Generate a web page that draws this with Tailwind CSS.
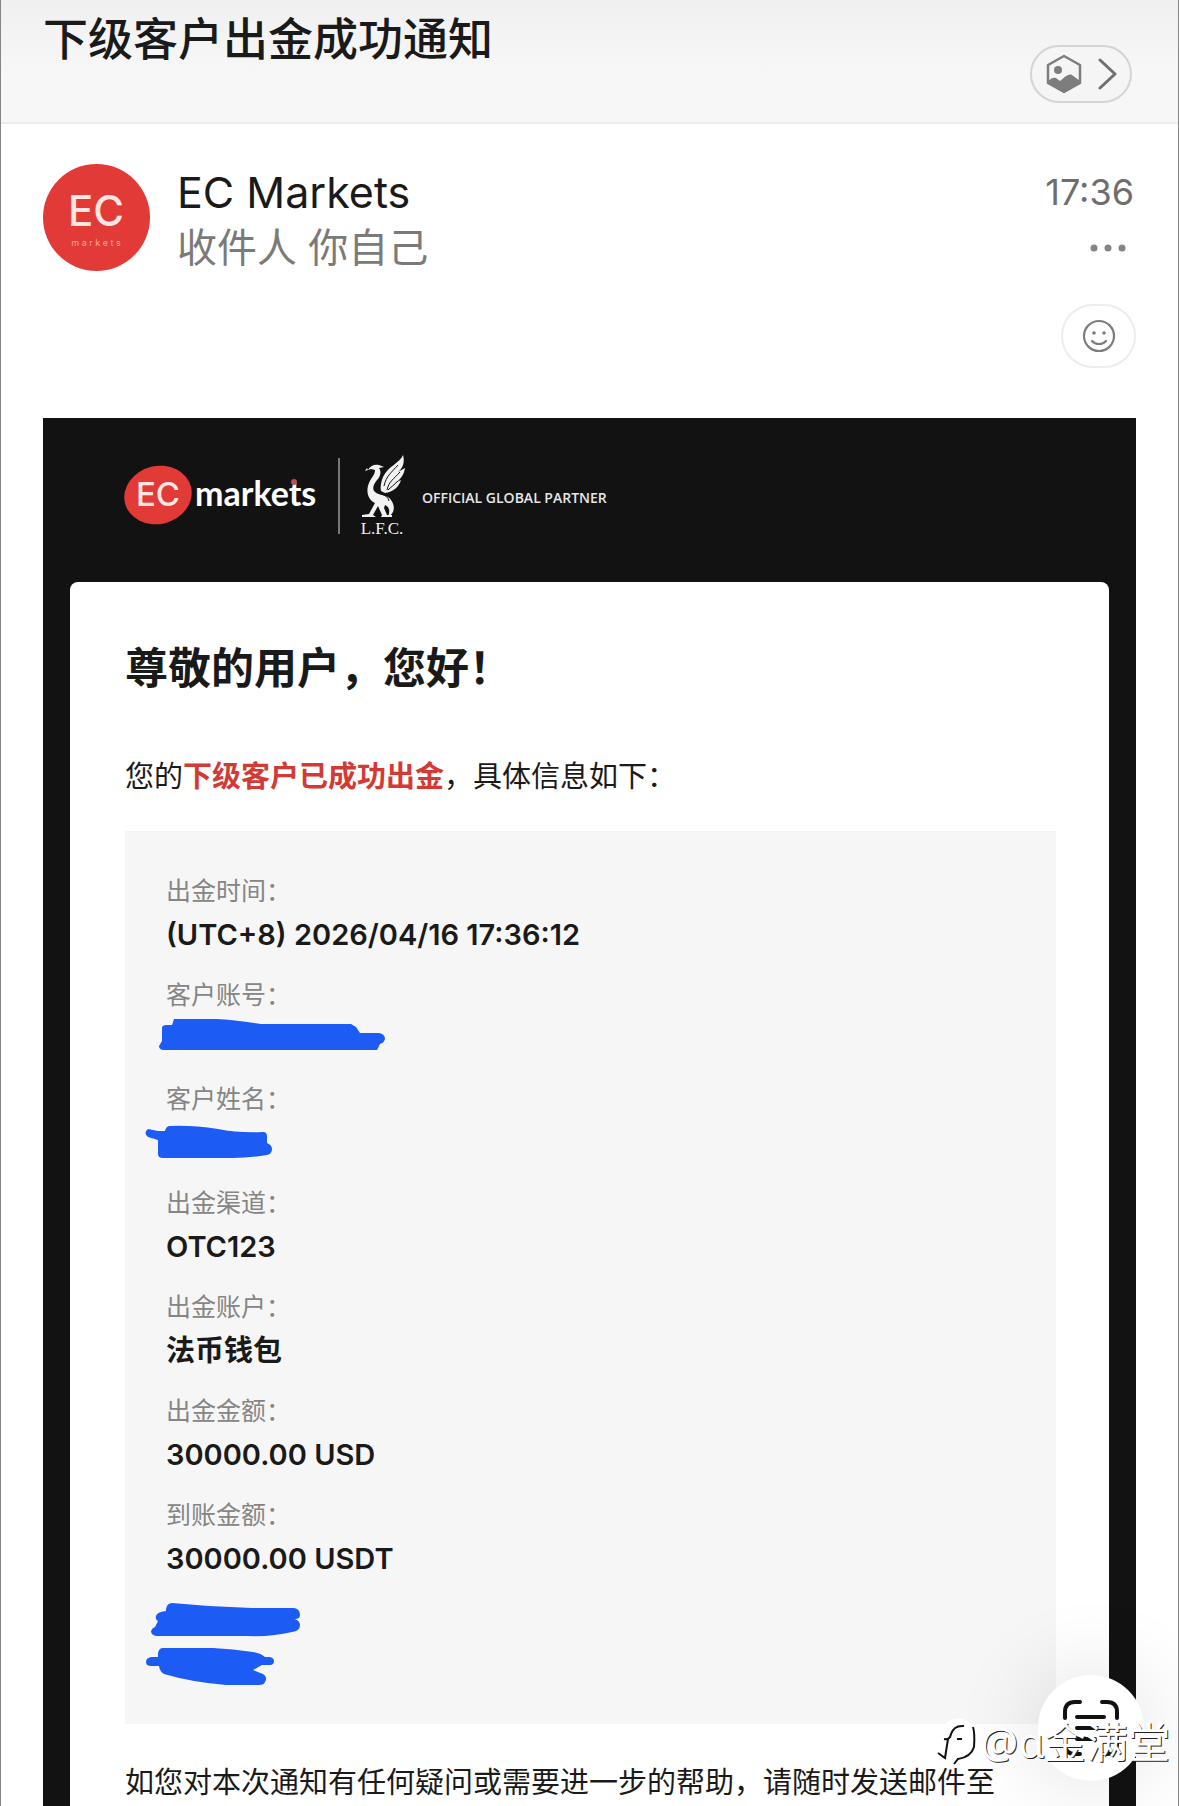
<!DOCTYPE html>
<html lang="zh-CN">
<head>
    <meta charset="UTF-8">
    <meta name="viewport" content="width=device-width, initial-scale=1.0">
    <title>下级客户出金成功通知</title>
    <script src="https://cdn.jsdelivr.net/npm/@tailwindcss/browser@4"></script>
</head>
<body class="bg-white font-['Inter','Noto_Sans_CJK_SC',sans-serif] text-[#1a1a1a]">
    <div class="relative min-h-screen overflow-hidden border-x border-[#858585]">
        <!-- Subject bar -->
        <header class="flex h-[124px] items-start justify-between border-b-2 border-[#ececec] bg-linear-to-b from-[#f0f0f0] to-[#f7f7f7] to-60% pr-[46px] pl-[42px]">
            <h1 class="mt-2 text-[45px] leading-[64px] font-medium">下级客户出金成功通知</h1>
            <button type="button" aria-label="图片" class="mt-[45px] flex h-[58px] w-[102px] items-center justify-between rounded-full border-2 border-[#d4d4d4] bg-[#f5f5f5] pr-3 pl-3">
                <svg class="h-10 w-10" viewBox="0 0 40 40" fill="none">
                    <path d="M20 2 36 11V29L20 38 4 29V11Z" stroke="#7d7d7d" stroke-width="2.5" stroke-linejoin="round" />
                    <circle cx="14" cy="16" r="4" fill="#7d7d7d" />
                    <path d="M4 27c3-3 6-4 8-3l4 3c4-3 8-8 12-6l8 6v2L20 38 4 29Z" fill="#7d7d7d" />
                </svg>
                <svg class="h-8 w-5" viewBox="0 0 20 32" fill="none" stroke="#6f6f6f" stroke-width="3" stroke-linecap="round" stroke-linejoin="round">
                    <path d="m2 2 15 14L2 30" />
                </svg>
            </button>
        </header>

        <main class="px-[42px]">
            <!-- Sender -->
            <section class="flex items-start gap-[27px] pt-10">
                <svg class="h-[107px] w-[107px] shrink-0" viewBox="0 0 107 107" role="img" aria-label="EC Markets">
                    <circle cx="53.5" cy="53.5" r="53.5" fill="#e23a36" />
                    <text x="53" y="62" text-anchor="middle" font-family="Inter" font-size="42" font-weight="500" fill="#ffe6e2">EC</text>
                    <text x="53" y="82" text-anchor="middle" font-family="Inter" font-size="9" fill="#f9a8a2">m a r k e t s</text>
                </svg>
                <div class="grow pt-1">
                    <p class="text-[43px] leading-[48px]">EC Markets</p>
                    <p class="mt-1 text-[40px] leading-[56px] text-[#7a7a7a]">收件人 你自己</p>
                </div>
                <div class="flex flex-col items-end">
                    <time class="mt-1 mr-0.5 text-[36px] leading-[48px] text-[#6e6e6e]">17:36</time>
                    <button type="button" aria-label="更多" class="mt-6 mr-2">
                        <svg class="h-4 w-10" viewBox="0 0 40 16" fill="#858585">
                            <circle cx="6" cy="8" r="3.5" />
                            <circle cx="20" cy="8" r="3.5" />
                            <circle cx="34" cy="8" r="3.5" />
                        </svg>
                    </button>
                </div>
            </section>
            <div class="mt-7 flex justify-end">
                <button type="button" aria-label="表情回应" class="flex h-16 w-[75px] items-center justify-center rounded-full border-2 border-[#ededed]">
                    <svg class="h-9 w-9" viewBox="0 0 36 36" fill="none" stroke="#7d7d7d" stroke-width="2.2" stroke-linecap="round">
                        <circle cx="18" cy="18" r="15" />
                        <path d="M11 23c3.500 4 10.500 4 14 0" />
                        <circle cx="13" cy="15" r="1.800" fill="#7d7d7d" stroke="none" />
                        <circle cx="23" cy="15" r="1.800" fill="#7d7d7d" stroke="none" />
                    </svg>
                </button>
            </div>

            <!-- Mail body -->
            <article class="mt-[50px] bg-[#121212] px-[27px]">
                <div class="flex h-[164px] items-start pt-[34px] pl-[55px]">
                    <svg class="h-[88px] w-[280px] overflow-visible" viewBox="0 0 280 88" role="img" aria-label="EC markets, L.F.C.">
                        <ellipse cx="33" cy="43" rx="34" ry="29" transform="rotate(-14 33 43)" fill="#e23a36" />
                        <text x="33" y="54" text-anchor="middle" font-family="Inter" font-size="33" font-weight="500" fill="#ffe6e2">EC</text>
                        <text x="70" y="54" font-family="Lato" font-size="34" font-weight="700" fill="#ffffff">markets</text>
                        <circle cx="169" cy="30" r="3" fill="#b0525a" />
                        <path d="M214 6v76" stroke="#777777" stroke-width="2" />
                        <g fill="#f2f2f2">
                            <path d="M278 3c-3 8-15 11-20 22-2 5-3 10-2 14l4 2c8-1 14-6 16-13l-6 3c5-3 9-8 10-15l-7 4c5-4 7-10 5-17Z" />
                            <path d="M243 18c2-4 6-6 11-5l5 2-5 1c3 4 1 9-2 12-4 5-5 9-2 12 4 4 12 2 16 8 5 7 3 14-3 17 2-5 2-10-3-12l-1 3 3 7h5v2h-11l1-2-4-9-5 9 3 2h-14v-2l7-1 6-11c-8-4-9-13-6-20 2-5 6-8 6-13l-4-1-6 2 2-3Z" />
                        </g>
                        <g stroke="#121212" stroke-width="1" fill="none">
                            <path d="M273 13c-6 7-12 11-14 21M275 20c-6 7-11 9-13 18M273 29c-4 4-7 6-10 9M249 37c4 6 13 4 15 12" />
                        </g>
                        <text x="257" y="82" text-anchor="middle" font-family="Liberation Serif" font-size="17" fill="#f2f2f2">L.F.C.</text>
                    </svg>
                    <p class="mt-9 ml-[17px] font-['Open_Sans'] text-sm leading-5 font-semibold whitespace-nowrap text-[#e6e6e6]">OFFICIAL GLOBAL PARTNER</p>
                </div>

                <div class="rounded-t-lg bg-white pt-[54px] pr-[53px] pb-1 pl-[55px]">
                    <h2 class="text-[43px] leading-[64px] font-bold">尊敬的用户，您好！</h2>
                    <p class="mt-14 text-[29px] leading-[42px]">您的<strong class="text-[#d33a35]">下级客户已成功出金</strong>，具体信息如下：</p>

                    <!-- Withdrawal details -->
                    <dl class="mt-[33px] flex h-[893px] flex-col gap-4 bg-[#f6f6f6] px-[41px] pt-[38px]">
                        <div>
                            <dt class="text-[25px] leading-[44px] text-[#858585]">出金时间：</dt>
                            <dd class="text-[29px] leading-[44px] font-semibold">(UTC+8) 2026/04/16 17:36:12</dd>
                        </div>
                        <div>
                            <dt class="text-[25px] leading-[44px] text-[#858585]">客户账号：</dt>
                            <dd class="h-11">
                                <svg class="-ml-2 h-11 w-[230px]" viewBox="0 0 230 44" fill="#1c5cf5">
                                    <path d="M4 10q1-2 4-2h6l2-6h42q20 1 45 5h90l5 3 4 6h19q6 1 6 6-1 4-5 5l-3 6H6q-5 0-5-4l3-5Z" />
                                </svg>
                            </dd>
                        </div>
                        <div>
                            <dt class="text-[25px] leading-[44px] text-[#858585]">客户姓名：</dt>
                            <dd class="h-11">
                                <svg class="-ml-[22px] h-11 w-[130px]" viewBox="0 0 130 44" fill="#1c5cf5">
                                    <path d="M4 8q-5 4 0 8l10 3v14q0 4 5 4h70q16 0 34-3 5-1 5-6 0-4-5-6v-7q0-4-4-4-25 1-45-3Q48 4 26 5q-4 0-5 5h-7Z" />
                                </svg>
                            </dd>
                        </div>
                        <div>
                            <dt class="text-[25px] leading-[44px] text-[#858585]">出金渠道：</dt>
                            <dd class="text-[29px] leading-[44px] font-semibold">OTC123</dd>
                        </div>
                        <div>
                            <dt class="text-[25px] leading-[44px] text-[#858585]">出金账户：</dt>
                            <dd class="text-[29px] leading-[44px] font-bold">法币钱包</dd>
                        </div>
                        <div>
                            <dt class="text-[25px] leading-[44px] text-[#858585]">出金金额：</dt>
                            <dd class="text-[29px] leading-[44px] font-semibold">30000.00 USD</dd>
                        </div>
                        <div>
                            <dt class="text-[25px] leading-[44px] text-[#858585]">到账金额：</dt>
                            <dd class="text-[29px] leading-[44px] font-semibold">30000.00 USDT</dd>
                        </div>
                        <div>
                            <svg class="-ml-5 h-[88px] w-[156px]" viewBox="0 -3 156 88" fill="#1c5cf5">
                                <path d="M20 9q1-6 6-6 40 4 80 5h42q6 1 6 7 0 4-5 4 5 2 5 6 0 6-8 7-20 5-45 4H10q-5-1-5-5 1-3 4-4l3-6q-3-1-2-5 1-4 10-5Z" />
                                <path d="M12 53q1-5 5-5h50q20 1 40 4 8 1 12 5h5q4 1 4 4 0 4-4 4h-8l-9 5 10 4q5 3 2 8-1 3-6 3H80Q45 82 18 74q-4-2-5-8H5q-5 0-5-4t5-5h7Z" />
                            </svg>
                        </div>
                    </dl>

                    <p class="mt-[38px] text-[29px] leading-[42px] whitespace-nowrap">如您对本次通知有任何疑问或需要进一步的帮助，请随时发送邮件至</p>
                </div>
            </article>
        </main>

        <!-- Floating scan button -->
        <button type="button" aria-label="扫描文字" class="absolute right-[34px] bottom-[27px] flex h-[106px] w-[106px] items-center justify-center rounded-full bg-white shadow-[0_0_90px_rgba(0,0,0,0.14)]">
            <svg class="h-16 w-16" viewBox="0 0 64 64" fill="none" stroke="#111111" stroke-width="4" stroke-linecap="round">
                <path d="M6 22V16Q6 6 16 6h5M43 6h5q10 0 10 10v6M6 42v6q0 10 10 10h5M43 58h5q10 0 10-10v-6" />
                <path d="M18 21h27M18 32h27M18 43h18" />
            </svg>
        </button>

        <!-- Author watermark -->
        <div class="absolute right-2 bottom-[38px] flex items-center text-white">
            <svg class="h-12 w-11" viewBox="0 0 44 48" fill="none">
                <path d="M3 34Q-2 14 8 7 16-1 27 1q11 3 11 19 0 17-14 20l-6 6-2-6-8 1Z" fill="#ffffff" />
                <path d="M8 21q6 1 7-5 3-9 13-8M12 21 9 40l-7-5M21 21h5M37 9q2 6 1 20-3 10-16 12l-4 5" stroke="#111111" stroke-width="2" />
            </svg>
            <span class="font-['Noto_Sans','Noto_Sans_CJK_SC',sans-serif] text-[42px] leading-[56px] text-shadow-[1px_1px_0_#222222]">@ɑ金满堂</span>
        </div>
    </div>
</body>
</html>
